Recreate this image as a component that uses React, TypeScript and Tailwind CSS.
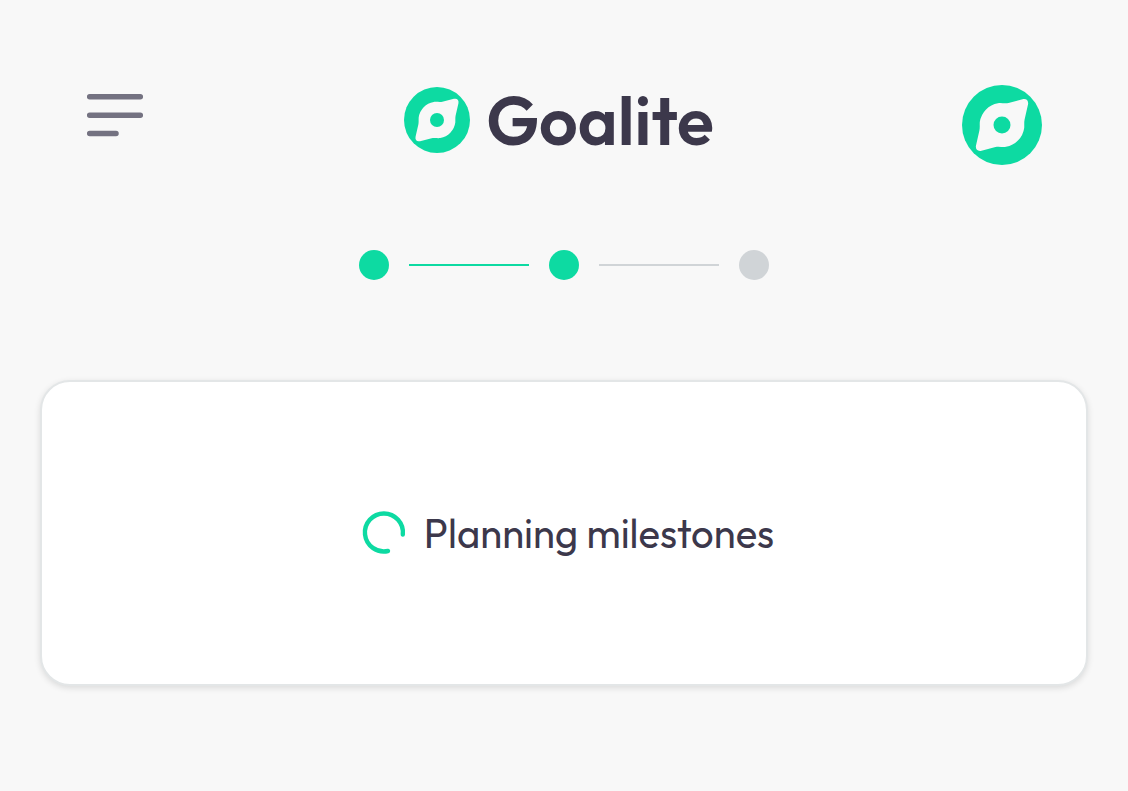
import React from 'react';

interface CompassProps {
  className?: string;
}

function Compass({ className }: CompassProps) {
  return (
    <svg className={className} viewBox="0 0 80 80" aria-hidden="true">
      <circle cx="40" cy="40" r="40" fill="#0ddaa2" />
      <path
        d="M36 18.2C39 17.6 43 18.8 46.5 18L60.5 14.3C64.5 13.4 66.8 15.8 66 19.6L62.6 34.5C62 37 62.4 39.5 62.2 43A22.2 22.2 0 0 1 44 61.8C41 62.4 37 61.2 33.5 62L19.5 65.7C15.5 66.6 13.2 64.2 14 60.4L17.4 45.5C18 43 17.6 40.5 17.8 37A22.2 22.2 0 0 1 36 18.2Z"
        fill="#f8f8f8"
      />
      <circle cx="40" cy="40" r="8.5" fill="#0ddaa2" />
    </svg>
  );
}

function Header() {
  return (
    <header className="grid grid-cols-[1fr_auto_1fr] items-start px-[86px]">
      <button type="button" aria-label="Menu" className="flex h-[60px] w-[58px] items-center">
        <svg className="h-11 w-[58px]" viewBox="0 0 58 44" stroke="#747281" strokeWidth="5.5" strokeLinecap="round">
          <path d="M3.7 3.7H54.3M3.7 22.2H54.3M3.7 40.5H30" />
        </svg>
      </button>
      <a href="#" className="flex h-[70px] items-center gap-4 pr-2.5">
        <Compass className="h-[66px] w-[66px]" />
        <span className="text-[68px] leading-none font-semibold">Goalite</span>
      </a>
      <button type="button" aria-label="Profile" className="justify-self-end">
        <Compass className="h-20 w-20" />
      </button>
    </header>
  );
}

function Stepper() {
  return (
    <div className="mt-[85px] flex items-center justify-center gap-5">
      <span className="h-[30px] w-[30px] rounded-full bg-[#0ddaa2]" />
      <span className="h-[2px] w-[120px] bg-[#0ddaa2]" />
      <span className="h-[30px] w-[30px] rounded-full bg-[#0ddaa2]" />
      <span className="h-[2px] w-[120px] bg-[#d0d4d7]" />
      <span className="h-[30px] w-[30px] rounded-full bg-[#d0d4d7]" />
    </div>
  );
}

function LoadingCard() {
  return (
    <main className="mx-10 mt-[100px] flex items-center justify-center gap-2.5 rounded-[30px] border-2 border-[#e3e6e7] bg-white py-[121px] shadow-[0_2px_6px_rgba(0,0,0,0.12)]">
      <svg className="h-[60px] w-[60px]" viewBox="0 0 60 60" fill="none" aria-hidden="true">
        <path
          d="M48.8 31.5A19 19 0 1 0 34 48"
          stroke="#0ddaa2"
          strokeWidth="4.4"
          strokeLinecap="round"
        />
      </svg>
      <p className="text-[40px] leading-none">Planning milestones</p>
    </main>
  );
}

export default function App() {
  return (
    <div className="min-h-screen bg-[#f8f8f8] pt-[85px] pb-20 font-['Outfit','Lato',sans-serif] text-[#3c384b]">
      <Header />
      <Stepper />
      <LoadingCard />
    </div>
  );
}
